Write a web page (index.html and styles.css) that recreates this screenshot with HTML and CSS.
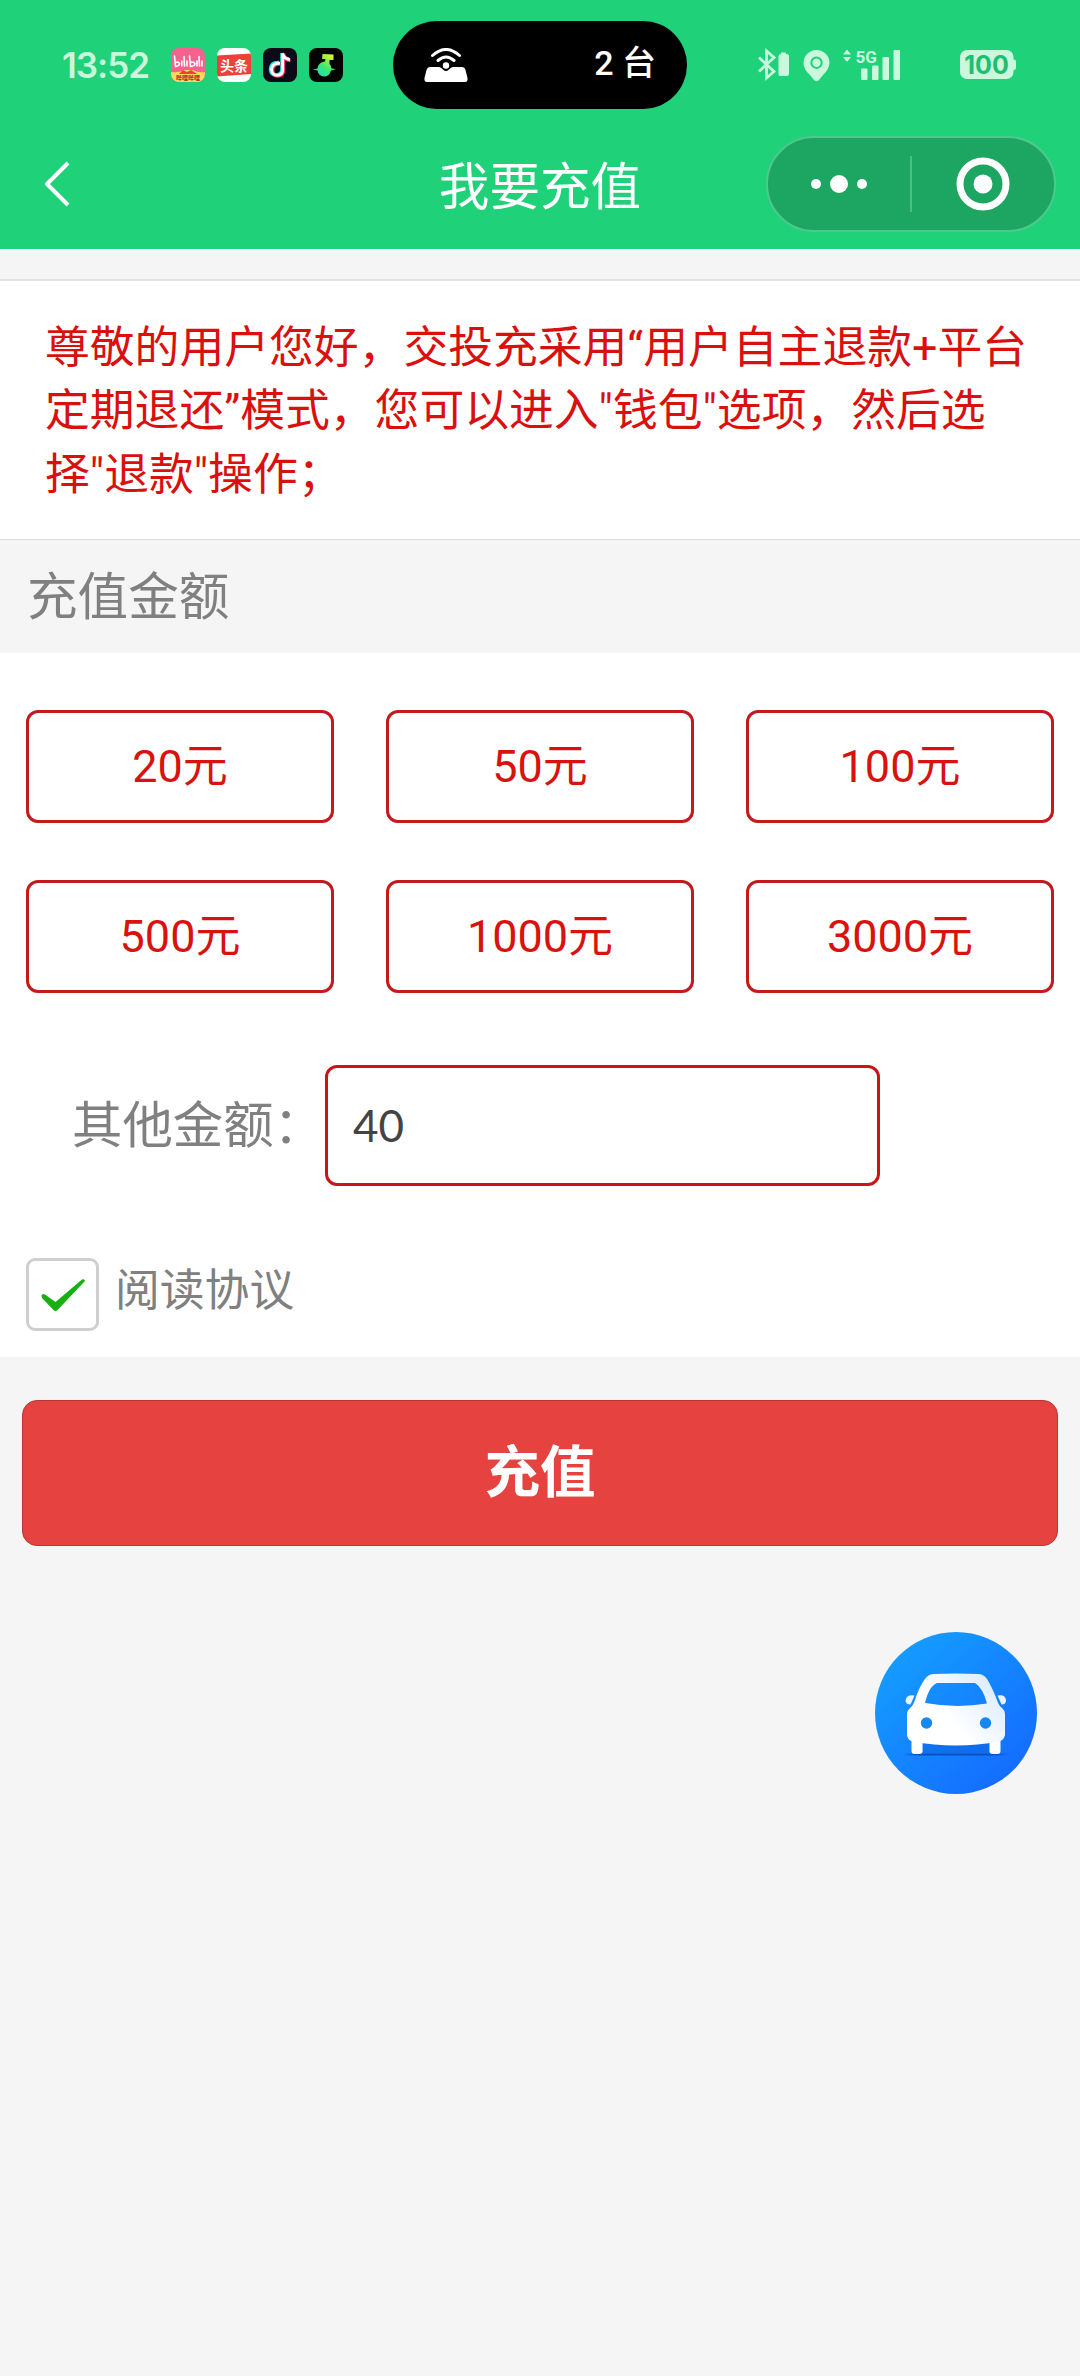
FILE: index.html
```
<!DOCTYPE html>

<html lang="zh-CN">
	<head>
		<title>我要充值</title>
		<meta charset="utf-8" />
		<link rel="stylesheet" href="styles.css">
	</head>
	<body>
		<header id="top">
			<div class="status">
				<div class="time">13:52</div>
				<div class="apps">
					<svg width="34" height="34" viewBox="0 0 34 34">
						<defs><clipPath id="round"><rect width="34" height="34" rx="8" /></clipPath></defs>
						<g clip-path="url(#round)">
							<rect width="34" height="34" fill="#f5628f" />
							<path d="M0 24 Q8 25 13 22 L22 22 Q27 25 34 24 V34 H0Z" fill="#ffd75e" />
							<path d="M8 26 L12 22 L16 24 L20 22 L26 26Z" fill="#e8443c" />
							<g fill="none" stroke="#fff" stroke-width="1.6" stroke-linecap="round" stroke-linejoin="round">
								<path d="M3.500 8 L4.500 18.500 Q8.500 18 8.500 15.500 Q8 13.500 4.500 14.500 M10.800 13 V18 M13 8.500 L13.500 18 M16 13 V18" />
								<path d="M18.500 8 L19.500 18.500 Q24 18 24 15.500 Q23 13.500 19.500 14.500 M26 13 V18 M28 8.500 L28.500 18 M31 13 V18" />
							</g>
							<text x="17" y="32" class="tiny" fill="#b3261e">哔哩哔哩</text>
						</g>
					</svg>
					<svg width="34" height="34" viewBox="0 0 34 34">
						<g clip-path="url(#round)">
							<rect width="34" height="34" fill="#fff" />
							<path d="M0 7.500 L34 5.500 V26 L0 28.500Z" fill="#ee4038" />
							<text x="17" y="22.500" class="toutiao" fill="#fff">头条</text>
						</g>
					</svg>
					<svg width="34" height="34" viewBox="0 0 34 34">
						<rect width="34" height="34" rx="8" fill="#0c0a16" />
						<g fill="none" stroke-width="3.600">
							<path d="M16 14.500 Q8 14 7.500 21 Q8 27 13.500 27 Q19 26.500 19 21 V5 Q20 10.500 26 11" stroke="#25e8e4" />
							<path d="M17.500 16 Q10 15.500 9.500 22 Q10 28 15 28 Q20.500 27.500 20.500 22 V6 Q22 12 27.500 12.500" stroke="#f7305c" />
							<path d="M17 15.300 Q9 15 8.600 21.500 Q9 27.200 14.300 27.300 Q19.700 27 19.700 21.500 V5.500 Q21 11 27 11.700" stroke="#fff" stroke-width="2.900" />
						</g>
					</svg>
					<svg width="34" height="34" viewBox="0 0 34 34">
						<defs><linearGradient id="soda" x1="0" y1="1" x2=".7" y2="0"><stop offset="0" stop-color="#18d8c8" /><stop offset=".5" stop-color="#36ea78" /><stop offset="1" stop-color="#d4f52c" /></linearGradient></defs>
						<rect width="34" height="34" rx="8" fill="#020503" />
						<path d="M13.500 6 L24.500 6.500 L24.500 12 H20.500 L20.500 16 Q22.500 18 22.500 20.500 L27 21 L22 22.500 Q20.500 28.500 15 28.500 Q9.500 28 8.500 22.500 L4 21.500 L8.500 20.500 Q9 14.500 16 13.500 L16.500 11 H13Z" fill="url(#soda)" />
					</svg>
				</div>
				<div class="island">
					<svg width="44" height="34" viewBox="0 0 44 34">
						<path d="M6 19 H15 Q17 19 19 21.500 Q22 24.500 25 21.500 Q27 19 29 19 H38 Q40.500 19 41.500 22 L43.500 30 Q44 34 41 34 H3 Q0 34 .5 30 L2.500 22 Q3.500 19 6 19Z" fill="#fff" />
						<circle cx="22" cy="17.500" r="3.200" fill="#fff" />
						<path d="M8.500 7.500 Q22 -4.500 35.500 7.500 M14 12.500 Q22 5.500 30 12.500" fill="none" stroke="#fff" stroke-width="3" stroke-linecap="round" />
					</svg>
					<span>2 台</span>
				</div>
				<div class="signals">
					<svg width="144" height="34" viewBox="0 0 144 34" fill="#c9f8dd">
						<!-- bluetooth + headset battery -->
						<path d="M2 9.500 L17 23.500 L9.500 30 V3 L17 9.500 L2 23.500" fill="none" stroke="#c9f8dd" stroke-width="2.800" />
						<path d="M24 4.500 H29 V6 H29.500 Q32 6 32 8 V25.500 Q32 28 30 28 H23 Q21.500 28 21.500 26 V8 Q21.500 6 24 6Z" />
						<!-- location -->
						<path fill-rule="evenodd" d="M59.500 2 A13 13 0 0 1 72.500 15 Q72 21.500 66 27 L61.500 32.500 Q59.500 34 57.500 32.500 L53 27 Q46.500 21.500 46.500 15 A13 13 0 0 1 59.500 2Z M59.500 8.500 A6.200 6.200 0 1 0 59.500 20.900 A6.200 6.200 0 1 0 59.500 8.500Z" />
						<circle cx="59.500" cy="14.700" r="4.200" />
						<!-- mobile network -->
						<path d="M86 6.500 L90 1.500 L94 6.500Z M86 9 H94 L90 14Z" />
						<text x="98.500" y="14.500" class="net">5G</text>
						<rect x="104" y="20.500" width="6.500" height="11.500" rx="1" />
						<rect x="115" y="17.500" width="6.500" height="14.500" rx="1" />
						<rect x="125.500" y="9" width="6.500" height="23" rx="1" />
						<rect x="136.500" y="2" width="6.500" height="30" rx="1" />
					</svg>
					<svg width="57" height="30" viewBox="0 0 57 30">
						<rect width="53.500" height="29" rx="7" fill="#c9f8dd" />
						<rect x="52" y="9.500" width="4" height="10.500" rx="2" fill="#c9f8dd" />
						<text x="26.500" y="23.500" class="level" fill="#22bd70">100</text>
					</svg>
				</div>
			</div>
			<div class="nav">
				<svg class="back" width="28" height="48" viewBox="0 0 28 48">
					<path d="M25 3 L4 24 L25 45" fill="none" stroke="#fff" stroke-width="4" stroke-linejoin="round" />
				</svg>
				<h1>我要充值</h1>
				<div class="capsule">
					<div class="half">
						<svg width="58" height="20" viewBox="0 0 58 20" fill="#fff">
							<circle cx="6" cy="10" r="5" /><circle cx="29" cy="10" r="9" /><circle cx="52" cy="10" r="5" />
						</svg>
					</div>
					<div class="line"></div>
					<div class="half">
						<svg width="54" height="54" viewBox="0 0 54 54">
							<circle cx="27" cy="27" r="23" fill="none" stroke="#fff" stroke-width="7" />
							<circle cx="27" cy="27" r="9.500" fill="#fff" />
						</svg>
					</div>
				</div>
			</div>
		</header>

		<div class="notice">尊敬的用户您好，交投充采用“用户自主退款+平台<br>定期退还”模式，您可以进入"钱包"选项，然后选<br>择"退款"操作；</div>

		<h2>充值金额</h2>
		<div class="panel">
			<div class="amounts">
				<div class="amount">20元</div>
				<div class="amount">50元</div>
				<div class="amount">100元</div>
				<div class="amount">500元</div>
				<div class="amount">1000元</div>
				<div class="amount">3000元</div>
			</div>
			<div class="other">
				<label for="money">其他金额：</label>
				<input id="money" type="text" value="40" />
			</div>
			<div class="agree">
				<div class="checkbox">
					<svg width="46" height="34" viewBox="0 0 46 34">
						<path d="M1.500 17.500 Q2.500 15 5 16.500 L15.500 24 L42 1.500 Q44.500 .5 45 3 L17.500 32 Q15.500 34 13.500 32 L2 20Z" fill="#16b010" />
					</svg>
				</div>
				<span>阅读协议</span>
			</div>
		</div>

		<div class="submit">充值</div>

		<div class="car">
			<svg width="162" height="162" viewBox="0 0 162 162">
				<defs>
					<linearGradient id="blue" x1=".1" y1=".2" x2=".8" y2=".95"><stop offset="0" stop-color="#149bff" /><stop offset="1" stop-color="#146cff" /></linearGradient>
					<linearGradient id="body" x1=".4" y1=".6" x2="1" y2=".2"><stop offset="0" stop-color="#fff" /><stop offset="1" stop-color="#d9ebff" /></linearGradient>
					<linearGradient id="shade" x1="0" x2="1"><stop offset="0" stop-color="#0b4fc0" stop-opacity="0" /><stop offset=".15" stop-color="#0b4fc0" /><stop offset=".85" stop-color="#0b4fc0" /><stop offset="1" stop-color="#0b4fc0" stop-opacity="0" /></linearGradient>
				</defs>
				<circle cx="81" cy="81" r="81" fill="url(#blue)" />
				<rect x="28" y="121.500" width="106" height="2" fill="url(#shade)" />
				<path d="M48 112 H114 V121 H48Z" fill="#0e5fd8" opacity=".5" />
				<path d="M36.500 107 H47.500 V119 Q47.500 122 44.500 122 H39.500 Q36.500 122 36.500 119Z M114.500 107 H125.500 V119 Q125.500 122 122.500 122 H117.500 Q114.500 122 114.500 119Z" fill="#fff" />
				<path d="M39.500 63.500 Q31 62 30.500 69 Q31 72.500 35.500 72.500Z M122.500 63.500 Q131 62 131 69 Q130.500 72.500 126.500 72.500Z" fill="#eaf4ff" />
				<path fill-rule="evenodd" fill="url(#body)" d="M58 42 Q81 41 104 42 Q109 42.500 112 47 Q117 55 122 68 Q124 74 127 76 Q129.500 78 130 82 V103 Q129 108 124 109.500 Q81 117.500 37.500 109.500 Q32.500 108 32 103 V82 Q32.500 78 35 76 Q38 74 40 68 Q44 55 50 47 Q53 42.500 58 42Z M62 51 Q54 54 50 71 Q81 76.500 112 71.500 Q108 56 100 51Z" />
				<circle cx="51.500" cy="91" r="5.700" fill="#1688f5" />
				<circle cx="110.500" cy="91" r="5.700" fill="#1688f5" />
			</svg>
		</div>
	</body>
</html>
```
FILE: styles.css
```
*{ box-sizing: border-box; }
body{
	margin: 0; min-height: 2376px; background: #f5f5f5;
	font-family: Roboto, "Noto Sans CJK SC", sans-serif;
}
svg{ display: block; flex: none; }

/* header */
#top{ height: 249px; background: #1fd179; color: white; }
.status{ height: 129px; padding-left: 62px; display: flex; align-items: center; }
.time{
	width: 109px; color: #c9f8dd; white-space: nowrap;
	font-family: Inter, Roboto, sans-serif; font-size: 35px; font-weight: 600; letter-spacing: -1px;
}
.apps{ width: 222px; display: flex; gap: 12px; }
.island{
	width: 294px; height: 88px; border-radius: 44px; background: black;
	padding: 0px 31px; display: flex; align-items: center; justify-content: space-between;
	font-size: 34px; font-weight: 500; line-height: 44px;
}
.island span{ padding-bottom: 3px; }
.signals{ margin-left: 70px; display: flex; align-items: center; gap: 59px; }
.tiny, .toutiao, .level{ text-anchor: middle; font-weight: bold; }
.tiny{ font-size: 6px; }
.toutiao{ font-size: 14px; }
.level{ font-family: Inter, sans-serif; font-size: 25px; }
.net{ font-size: 17px; font-weight: bold; }
.nav{
	height: 110px; padding: 0px 24px;
	display: grid; grid-template-columns: 290px 1fr 290px; align-items: center;
}
.back{ margin-left: 19px; }
h1{
	margin: 0; padding-top: 7px; text-align: center;
	font-size: 50.6px; font-weight: normal; line-height: 70px;
}
.capsule{
	height: 96px; border: 2px solid #4ec98b; border-radius: 48px;
	background: #1ca662; display: flex; align-items: center;
}
.half{ flex: 1; display: flex; justify-content: center; }
.line{ width: 2px; height: 56px; background: #4dbd85; }

/* content */
.notice{
	margin-top: 30px; padding: 35px 45px 36px; height: 261px;
	background: white; color: #d9100e; white-space: nowrap;
	border-top: 2px solid #e2e2e2; border-bottom: 1px solid #dcdcdc;
	font-size: 44.8px; line-height: 63.3px;
}
h2{
	margin: 0; height: 113px; padding: 23px 27px; color: #808080;
	font-size: 50.6px; font-weight: normal; line-height: 70px;
}
.panel{ height: 704px; padding: 57px 26px 0px; background: white; color: #808080; }
.amounts{ display: grid; grid-template-columns: repeat(3, 308px); column-gap: 52px; row-gap: 57px; }
.amount{
	height: 113px; border: 3px solid #c41a1c; border-radius: 12px;
	color: #d8120f; font-size: 45px; line-height: 107px; text-align: center;
}
.other{ margin: 72px 0px 0px 46px; display: flex; align-items: center; }
.other label{ width: 253px; padding-bottom: 8px; font-size: 50.4px; white-space: nowrap; }
#money{
	width: 555px; height: 121px; padding: 0px 25px 2px; background: white; color: #444;
	border: 3px solid #c91517; border-radius: 12px;
	font-family: Lato, sans-serif; font-size: 44px;
} #money:focus { outline: none; }
.agree{ margin-top: 72px; display: flex; font-size: 44.8px; line-height: 66px; }
.checkbox{
	width: 73px; height: 73px; margin: 0px 16px 0px 0px;
	border: 3px solid #cfcfcf; border-radius: 9px;
	display: flex; align-items: center; justify-content: center;
}
.submit{
	height: 146px; margin: 43px 22px 0px; background: #e64340; color: white;
	border: 1px solid #b93533; border-radius: 15px;
	font-size: 55.5px; font-weight: bold; line-height: 145px; text-align: center;
}
.car{ margin: 86px 43px 0px; display: flex; justify-content: flex-end; }
```
